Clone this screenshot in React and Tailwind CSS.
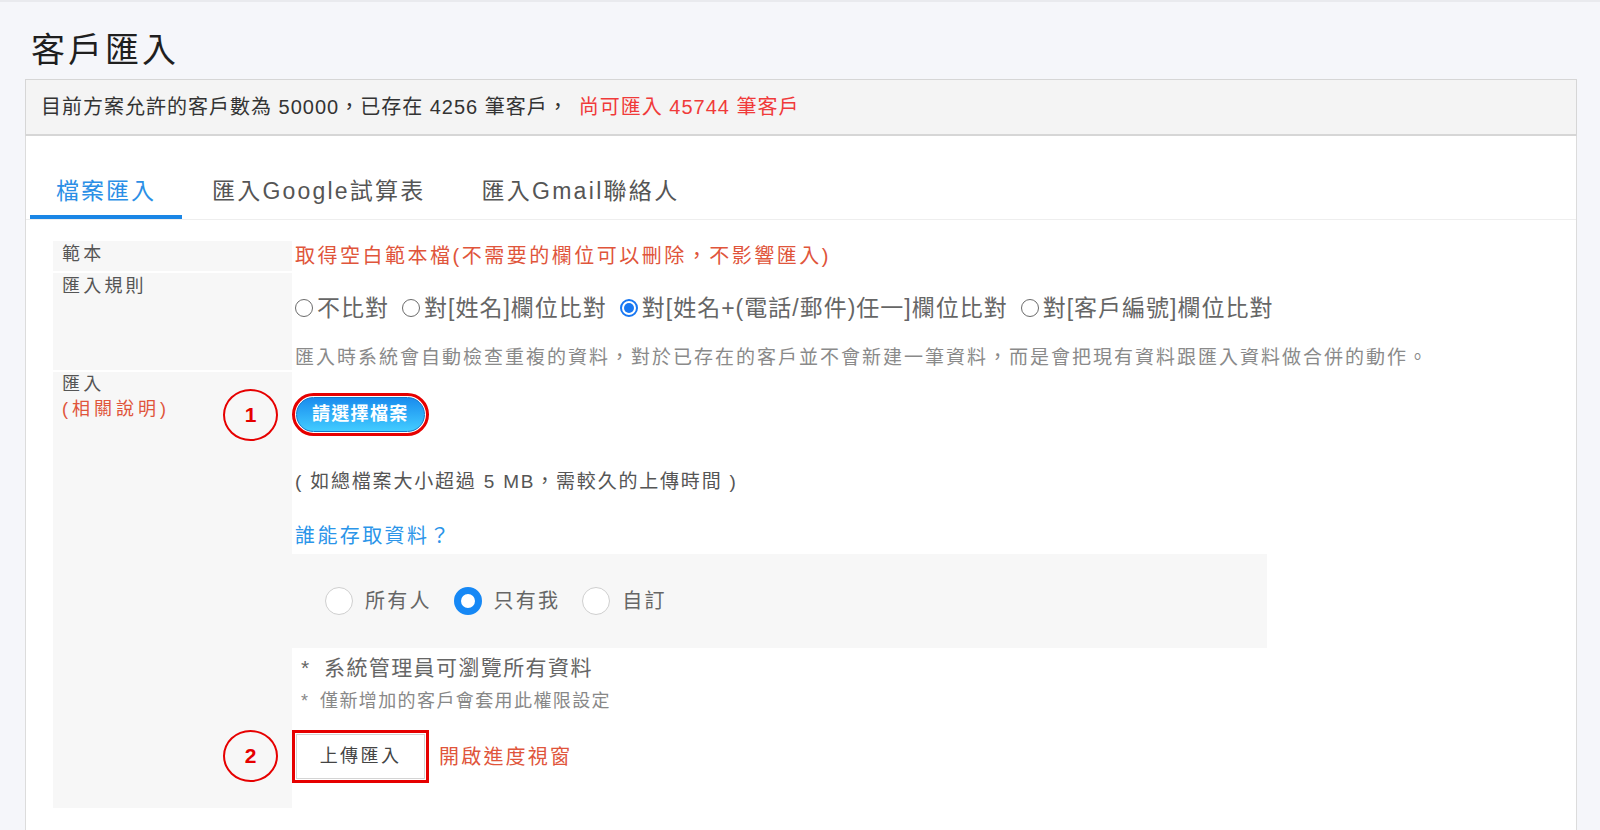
const SmallRadio = ({ on }) =>
    on ? (
        <span className="w-[18px] h-[18px] rounded-full border-2 border-[#1877f2] flex items-center justify-center shrink-0">
            <span className="w-[10px] h-[10px] rounded-full bg-[#1877f2]" />
        </span>
    ) : (
        <span className="w-[18px] h-[18px] rounded-full border-[1.5px] border-[#6b6b6b] shrink-0" />
    );

const BigRadio = ({ on }) =>
    on ? (
        <span className="w-[28px] h-[28px] rounded-full border-[7px] border-[#1688f5] bg-white shrink-0" />
    ) : (
        <span className="w-[28px] h-[28px] rounded-full border-[1.5px] border-[#cfcfcf] bg-white shrink-0" />
    );

const Mark = ({ n, top }) => (
    <span
        className={`absolute left-[170px] ${top} w-[55px] h-[52px] rounded-[50%] border-[2.5px] border-[#e60000] flex items-center justify-center text-[21px] font-bold text-[#e60000]`}
    >
        {n}
    </span>
);

const rules = [
    { label: '不比對', on: false },
    { label: '對[姓名]欄位比對', on: false },
    { label: '對[姓名+(電話/郵件)任一]欄位比對', on: true },
    { label: '對[客戶編號]欄位比對', on: false },
];

const access = [
    { label: '所有人', on: false },
    { label: '只有我', on: true },
    { label: '自訂', on: false },
];

export default function App() {
    return (
        <div className="w-[1600px] h-[830px] overflow-hidden bg-[#f5f6fa] border-t-2 border-[#e9eaee] pl-[25px] font-['Liberation_Sans','Noto_Sans_CJK_TC',sans-serif] flex flex-col">
            <h1 className="pl-[6px] pt-[26px] text-[34px] leading-[44px] tracking-[3px] text-[#1f1f1f]">客戶匯入</h1>

            <div className="w-[1552px] mt-[7px] h-[57px] bg-[#f4f4f4] border border-[#d6d6d6] border-b-2 flex items-center pl-[15px] text-[20px] tracking-[1px] text-[#333]">
                <span>目前方案允許的客戶數為 50000，已存在 4256 筆客戶，</span>
                <span className="ml-[10px] text-[#f03a3a]">尚可匯入 45744 筆客戶</span>
            </div>

            <div className="w-[1552px] flex-1 bg-white border-x border-[#dcdcdc] flex flex-col">
                <div className="mt-[28px] flex gap-[4px] pl-[4px] border-b border-[#eeeeee]">
                    <div className="px-[26px] pt-[12px] pb-[9px] leading-[30px] text-[23px] tracking-[2px] text-[#2b8fe6] border-b-4 border-[#1a86e6]">
                        檔案匯入
                    </div>
                    <div className="px-[26px] pt-[12px] pb-[9px] leading-[30px] text-[23px] tracking-[2.2px] text-[#555] border-b-4 border-transparent">
                        匯入Google試算表
                    </div>
                    <div className="px-[26px] pt-[12px] pb-[9px] leading-[30px] text-[23px] tracking-[2.3px] text-[#555] border-b-4 border-transparent">
                        匯入Gmail聯絡人
                    </div>
                </div>

                <div className="ml-[27px] mt-[21px] flex flex-col gap-[2px]">
                    <div className="flex">
                        <div className="w-[239px] bg-[#f7f7f7] pl-[9px] text-[18px] leading-[26px] tracking-[3.2px] text-[#555]">範本</div>
                        <div className="pl-[3px] text-[20px] leading-[30px] tracking-[2.5px] text-[#e0553b]">
                            取得空白範本檔(不需要的欄位可以刪除，不影響匯入)
                        </div>
                    </div>

                    <div className="flex">
                        <div className="w-[239px] bg-[#f7f7f7] pl-[9px] text-[18px] leading-[26px] tracking-[3.2px] text-[#555]">匯入規則</div>
                        <div className="pl-[3px] pt-[20px]">
                            <div className="flex items-center gap-[13px] text-[23px] leading-[30px] tracking-[1px] text-[#666]">
                                {rules.map((r) => (
                                    <span key={r.label} className="flex items-center gap-[4px]">
                                        <SmallRadio on={r.on} />
                                        {r.label}
                                    </span>
                                ))}
                            </div>
                            <div className="mt-[23px] text-[19px] leading-[24px] tracking-[2px] text-[#8a8a8a]">
                                匯入時系統會自動檢查重複的資料，對於已存在的客戶並不會新建一筆資料，而是會把現有資料跟匯入資料做合併的動作。
                            </div>
                        </div>
                    </div>

                    <div className="flex relative">
                        <div className="w-[239px] bg-[#f7f7f7] pl-[9px] text-[18px] leading-[25px] tracking-[3.2px] text-[#555]">
                            <div>匯入</div>
                            <div className="text-[#e0553b] tracking-[4px]">(相關說明)</div>
                        </div>
                        <Mark n="1" top="top-[17px]" />
                        <Mark n="2" top="top-[358px]" />

                        <div className="pt-[21px] pb-[25px] flex flex-col items-start">
                            <span className="rounded-full border-[3px] border-[#e60000] p-[1px]">
                                <span className="block h-[35px] px-[15px] rounded-full bg-gradient-to-b from-[#1b8cee] to-[#43ccff] border border-[#1479c9] text-white font-bold text-[18px] leading-[33px] tracking-[1.3px]">
                                    請選擇檔案
                                </span>
                            </span>

                            <div className="mt-[32px] pl-[3px] text-[19px] leading-[28px] tracking-[1.8px] text-[#555]">
                                ( 如總檔案大小超過 5 MB，需較久的上傳時間 )
                            </div>

                            <div className="mt-[26px] pl-[3px] text-[20px] leading-[28px] tracking-[2.4px] text-[#2b95e9]">誰能存取資料？</div>

                            <div className="mt-[4px] w-[975px] h-[94px] bg-[#f7f7f7] pl-[33px] flex items-center gap-[22px]">
                                {access.map((a) => (
                                    <span key={a.label} className="flex items-center gap-[12px] text-[20px] tracking-[2.2px] text-[#666]">
                                        <BigRadio on={a.on} />
                                        {a.label}
                                    </span>
                                ))}
                            </div>

                            <div className="mt-[6px] pl-[9px] flex text-[21px] leading-[28px] text-[#666]">
                                <span className="w-[23px]">*</span>
                                <span className="tracking-[1.4px]">系統管理員可瀏覽所有資料</span>
                            </div>
                            <div className="mt-[7px] pl-[9px] flex text-[18px] leading-[24px] text-[#888]">
                                <span className="w-[19px]">*</span>
                                <span className="tracking-[1.4px]">僅新增加的客戶會套用此權限設定</span>
                            </div>

                            <div className="mt-[17px] flex items-center">
                                <span className="w-[137px] h-[53px] border-[3px] border-[#e60000] flex items-center justify-center">
                                    <span className="w-[129px] h-[45px] border border-[#d4d4d4] bg-white flex items-center justify-center text-[18px] tracking-[2.4px] text-[#444]">
                                        上傳匯入
                                    </span>
                                </span>
                                <span className="ml-[10px] text-[20px] tracking-[2.2px] text-[#e0553b]">開啟進度視窗</span>
                            </div>
                        </div>
                    </div>
                </div>
            </div>
        </div>
    );
}
